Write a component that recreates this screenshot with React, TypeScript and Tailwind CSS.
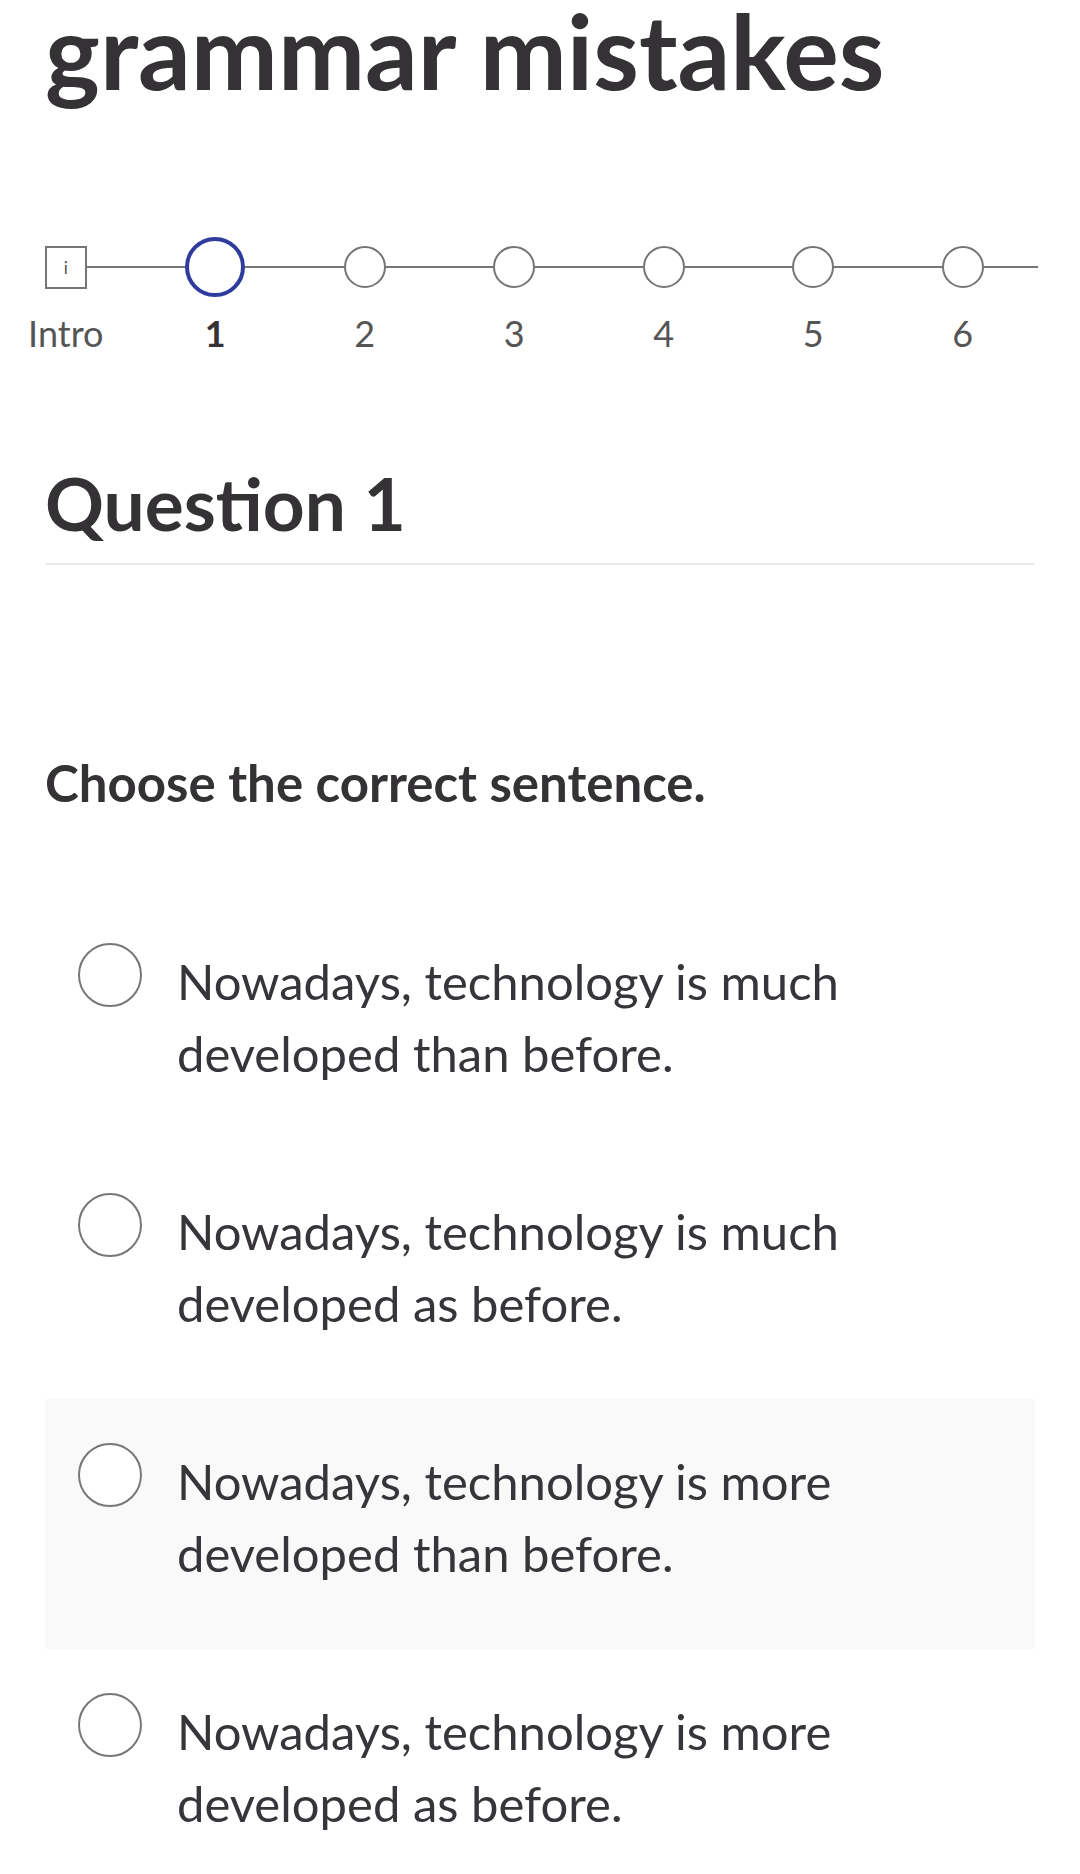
import { useState } from 'react';

const steps = ['Intro', '1', '2', '3', '4', '5', '6'];

const options = [
  'Nowadays, technology is much developed than before.',
  'Nowadays, technology is much developed as before.',
  'Nowadays, technology is more developed than before.',
  'Nowadays, technology is more developed as before.',
];

function Stepper({ current }: { current: number }) {
  return (
    <div className="ml-[-9px] mt-[136px] flex">
      {steps.map((label, i) => (
        <div key={label} className="flex w-[149.5px] flex-col items-center">
          <div className="flex h-[62px] w-full items-center">
            <div className={`h-[2px] flex-1 ${i === 0 ? 'bg-transparent' : 'bg-[#757575]'}`} />
            {i === 0 ? (
              <div className="flex h-[43px] w-[42px] items-center justify-center border-2 border-[#757575] text-[17px] leading-none text-[#555]">
                i
              </div>
            ) : i === current ? (
              <div className="h-[60px] w-[60px] rounded-full border-[4px] border-[#2f3c9e] bg-white" />
            ) : (
              <div className="h-[42px] w-[42px] rounded-full border-2 border-[#757575] bg-white" />
            )}
            <div className="h-[2px] flex-1 bg-[#757575]" />
          </div>
          <span
            className={`mt-[13px] text-[36px] leading-[44px] ${
              i === current ? 'font-bold text-[#353236]' : 'text-[#555]'
            }`}
          >
            {label}
          </span>
        </div>
      ))}
    </div>
  );
}

function Option({ text, hovered, onHover }: { text: string; hovered: boolean; onHover: () => void }) {
  return (
    <label
      onMouseEnter={onHover}
      className={`flex h-[250px] cursor-pointer items-start gap-[35px] pl-[33px] pr-[40px] pt-[46px] ${
        hovered ? 'bg-[#f9f9f9]' : 'bg-white'
      }`}
    >
      <span className="mt-[-2px] h-[64px] w-[64px] shrink-0 rounded-full border-[2.5px] border-[#777] bg-white" />
      <span className="max-w-[700px] text-[49px] leading-[72px] text-[#38353a]">{text}</span>
    </label>
  );
}

export default function App() {
  const [hovered, setHovered] = useState(2);

  return (
    <div className="w-[1080px] overflow-hidden bg-white font-['Lato',sans-serif] text-[#353236]">
      <h1 className="px-[45px] text-[104px] font-bold leading-[100px]">grammar mistakes</h1>

      <Stepper current={1} />

      <h2 className="mx-[45px] mt-[111px] border-b-2 border-[#ebebeb] pb-[22px] text-[73px] font-bold leading-[75px]">
        Question 1
      </h2>

      <p className="mt-[188px] px-[45px] text-[51px] font-bold leading-[60px]">Choose the correct sentence.</p>

      <div className="mx-[45px] mt-[86px] flex flex-col">
        {options.map((text, i) => (
          <Option key={i} text={text} hovered={hovered === i} onHover={() => setHovered(i)} />
        ))}
      </div>
    </div>
  );
}
